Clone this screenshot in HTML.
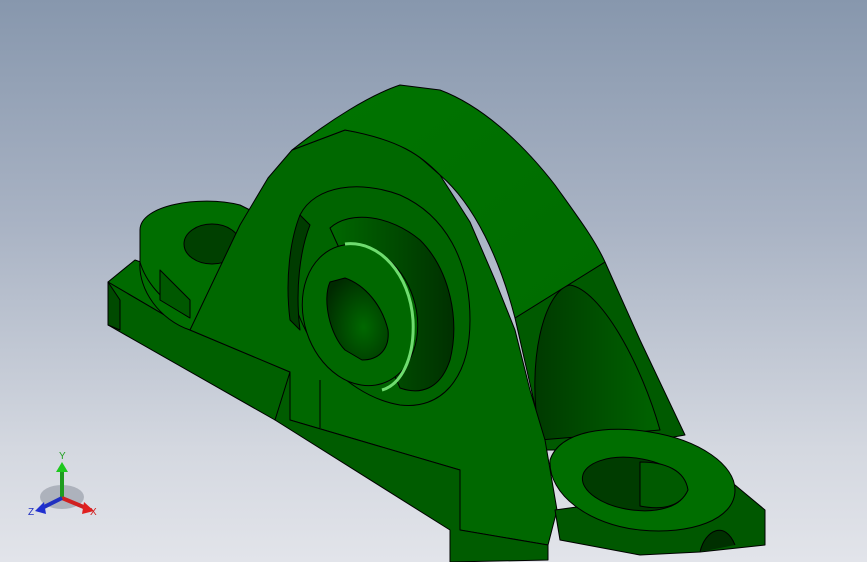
<!DOCTYPE html>
<html><head><style>
html,body{margin:0;padding:0;width:867px;height:562px;overflow:hidden}
body{background:linear-gradient(180deg,#8797ad 0%,#a9b3c4 40%,#d4d8e0 80%,#e2e4ea 100%)}
svg{position:absolute;left:0;top:0}
</style></head><body>
<svg width="867" height="562" viewBox="0 0 867 562" stroke="#000" stroke-width="1" stroke-linejoin="round">
<defs>
<linearGradient id="side" x1="0" x2="1"><stop offset="0" stop-color="#003a00"/><stop offset="1" stop-color="#006400"/></linearGradient>
<linearGradient id="top" x1="0" y1="0" x2="1" y2="1"><stop offset="0" stop-color="#007400"/><stop offset="1" stop-color="#006c00"/></linearGradient>
<radialGradient id="bore" cx="0.6" cy="0.6" r="0.7"><stop offset="0" stop-color="#006800"/><stop offset="1" stop-color="#002a00"/></radialGradient>
<linearGradient id="ring" x1="0" x2="1"><stop offset="0" stop-color="#006800"/><stop offset="1" stop-color="#003000"/></linearGradient>
</defs>
<!-- left base -->
<polygon points="108,282 135,260 250,300 190,330" fill="#006a00"/>
<polygon points="108,282 108,325 275,420 290,420 290,372 190,330" fill="#006000"/>
<polygon points="108,282 120,300 120,330 108,325" fill="#004a00"/>
<!-- left ear -->
<path d="M140,230 C140,205 200,195 240,205 L250,210 L215,300 L190,330 C160,320 138,290 140,262 Z" fill="#006e00"/>
<ellipse cx="212" cy="244" rx="28" ry="20" fill="#004000"/>
<path d="M140,230 L140,262 C145,280 160,300 190,318" fill="none"/>
<polygon points="160,270 160,300 190,318 190,300" fill="#005800"/>
<!-- right side body dark -->
<polygon points="515,318 605,262 640,340 685,435 600,450 545,450" fill="#005a00"/>
<path d="M540,440 C525,360 545,290 570,285 C600,290 640,360 660,430 Z" fill="url(#side)"/>
<!-- front of pedestal -->
<path d="M190,330 L240,225 L268,178 L292,150 L345,130 L400,140 L440,175 L470,222 L495,280 L515,330 L530,390 L545,440 L557,510 L548,545 L460,530 L460,470 L290,420 L290,372 Z" fill="#006800"/>
<!-- top curved surface -->
<path d="M292,150 C330,120 370,95 400,85 L440,90 C480,105 520,140 555,185 C580,220 595,240 605,262 L515,318 C500,260 475,205 440,175 C420,155 400,140 345,130 Z" fill="url(#top)"/>
<!-- left bottom front -->
<polygon points="290,372 290,420 460,470 460,530 548,545 548,560 450,562 450,530 275,420" fill="#005c00"/>
<line x1="320" y1="380" x2="320" y2="428"/>
<!-- bearing housing recess -->
<path d="M300,215 C315,185 360,180 400,195 C445,215 470,260 470,320 C470,380 440,410 400,405 C340,395 290,330 290,270 Z" fill="#006400"/>
<path d="M300,215 C290,240 285,280 290,320 L300,330 C295,290 300,250 310,225 Z" fill="#003c00"/>
<path d="M330,228 C350,210 390,215 420,240 C450,270 460,320 450,360 C440,390 420,395 400,388 L340,250 Z" fill="url(#ring)"/>
<!-- insert face -->
<ellipse cx="360" cy="315" rx="56" ry="72" transform="rotate(-18 360 315)" fill="#006800"/>
<path d="M345,244 C380,240 410,275 413,320 C415,360 400,385 382,390" fill="none" stroke="#6fdc6f" stroke-width="3"/>
<path d="M330,282 L345,278 C365,285 382,305 388,330 C390,350 378,360 362,360 L345,350 C330,335 322,300 330,282 Z" fill="url(#bore)"/>
<!-- right ear -->
<polygon points="555,510 560,540 640,555 700,552 765,545 765,510 735,485" fill="#005800"/>
<path d="M550,460 C560,430 610,425 650,432 C700,440 735,465 735,490 C735,520 690,535 640,530 C590,525 548,495 550,460 Z" fill="#006e00"/>
<ellipse cx="634" cy="484" rx="52" ry="26" transform="rotate(8 634 484)" fill="#003c00"/>
<path d="M640,462 L640,506 C660,510 680,508 688,490 C685,470 665,462 640,462 Z" fill="#005a00"/>
<path d="M700,552 C705,530 725,520 735,545" fill="#003000"/>
<line x1="765" y1="510" x2="765" y2="545"/>
<!-- triad -->
<g stroke="none">
<ellipse cx="62" cy="497" rx="22" ry="12" fill="#9aa0ab" opacity="0.7"/>
<rect x="60" y="468" width="4" height="30" fill="#1e9c1e"/>
<polygon points="56,472 62,462 68,472" fill="#1ec81e"/>
<line x1="62" y1="498" x2="86" y2="508" stroke="#d02020" stroke-width="4"/>
<polygon points="84,502 94,511 82,514" fill="#e02020"/>
<line x1="62" y1="498" x2="42" y2="508" stroke="#2030c0" stroke-width="4"/>
<polygon points="44,502 35,511 46,514" fill="#2030d0"/>
</g>
<g stroke="none" font-family="Liberation Sans, sans-serif" font-size="10">
<text x="59" y="459" fill="#20a020">Y</text>
<text x="90" y="515" fill="#d02020">X</text>
<text x="28" y="515" fill="#2030c0">Z</text>
</g>
</svg>
</body></html>
